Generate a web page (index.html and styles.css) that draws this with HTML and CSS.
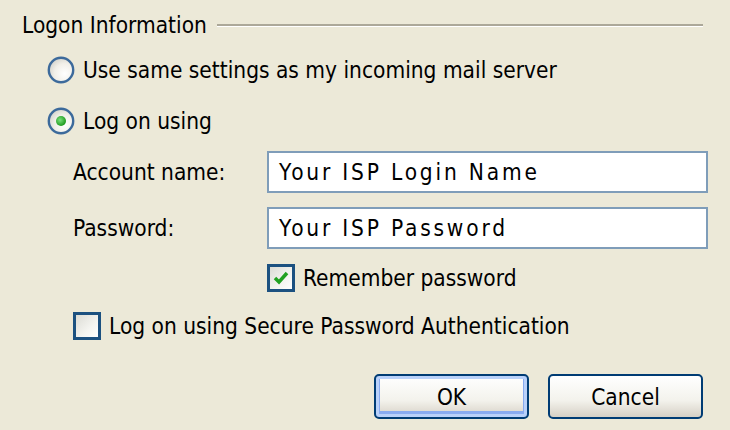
FILE: index.html
```html
<!DOCTYPE html>
<html lang="en">
<head>
    <meta charset="UTF-8">
    <title>Logon Information</title>
    <link rel="stylesheet" href="styles.css">
</head>
<body>
    <div class="dialog">
        <div class="group-title">
            <span>Logon Information</span>
            <div class="rule"></div>
        </div>

        <label class="option first">
            <svg class="radio" width="28" height="28" viewBox="0 0 28 28">
                <defs>
                    <radialGradient id="rf" cx="0.65" cy="0.65" r="0.7">
                        <stop offset="0" stop-color="#ffffff"/>
                        <stop offset="0.6" stop-color="#f1efe8"/>
                        <stop offset="1" stop-color="#d4d3cc"/>
                    </radialGradient>
                </defs>
                <circle cx="14" cy="14" r="12.2" fill="url(#rf)" stroke="#3c6a9b" stroke-width="2.4"/>
            </svg>
            <span>Use same settings as my incoming mail server</span>
        </label>

        <label class="option second">
            <svg class="radio" width="28" height="28" viewBox="0 0 28 28">
                <defs>
                    <radialGradient id="dot" cx="0.4" cy="0.4" r="0.6">
                        <stop offset="0" stop-color="#7be07b"/>
                        <stop offset="1" stop-color="#1f9a1f"/>
                    </radialGradient>
                </defs>
                <circle cx="14" cy="14" r="12.2" fill="url(#rf)" stroke="#3c6a9b" stroke-width="2.4"/>
                <circle cx="14" cy="14" r="5" fill="url(#dot)"/>
            </svg>
            <span>Log on using</span>
        </label>

        <div class="fields">
            <label for="account">Account name:</label>
            <div class="textbox" id="account">Your ISP Login Name</div>
            <label for="password">Password:</label>
            <div class="textbox" id="password">Your ISP Password</div>
        </div>

        <label class="check remember">
            <span class="box">
                <svg width="18" height="18" viewBox="0 0 18 18">
                    <path d="M3 9 L7 13 L15 4" fill="none" stroke="#21a121" stroke-width="3.5"/>
                </svg>
            </span>
            <span>Remember password</span>
        </label>

        <label class="check spa">
            <span class="box"></span>
            <span>Log on using Secure Password Authentication</span>
        </label>

        <div class="buttons">
            <button class="default">OK</button>
            <button>Cancel</button>
        </div>
    </div>
</body>
</html>
```

FILE: styles.css
```css
body {
    margin: 0;
    background-color: #ece9d8;
    font-family: "DejaVu Sans Condensed", "DejaVu Sans", sans-serif;
    font-size: 22.5px;
    color: #000;
}
.dialog {
    width: 730px;
    height: 430px;
    padding: 0 22px;
    box-sizing: border-box;
    display: flex;
    flex-direction: column;
}
.group-title {
    height: 50px;
    display: flex;
    align-items: center;
}
.rule {
    flex: 1;
    margin: 0 5px 0 10px;
    border-top: 2px solid #aca899;
    border-bottom: 1px solid #fff;
}
.option {
    height: 40px;
    display: flex;
    align-items: center;
    padding-left: 25px;
}
.option.second { margin-top: 11px; }
.radio { margin-right: 8px; }
.fields {
    margin-top: 10px;
    display: grid;
    grid-template-columns: 194px 1fr;
    row-gap: 14px;
    align-items: center;
    padding-left: 51px;
}
.textbox {
    height: 42px;
    box-sizing: border-box;
    border: 2px solid #7f9db9;
    background: #fff;
    padding-left: 10px;
    display: flex;
    align-items: center;
    letter-spacing: 2.8px;
}
.check {
    height: 28px;
    display: flex;
    align-items: center;
}
.remember { margin-top: 15px; padding-left: 245px; }
.spa { margin-top: 20px; padding-left: 51px; }
.box {
    width: 28px;
    height: 28px;
    box-sizing: border-box;
    border: 3px solid #1c5180;
    background: linear-gradient(135deg, #dcdcd5, #f4f4f0 60%, #ffffff);
    margin-right: 8px;
    display: flex;
    align-items: center;
    justify-content: center;
}
.buttons {
    margin-top: 34px;
    display: flex;
    justify-content: flex-end;
    gap: 19px;
    padding-right: 5px;
}
button {
    width: 155px;
    height: 45px;
    font-family: inherit;
    font-size: 22.5px;
    border: 2px solid #003c74;
    border-radius: 5px;
    background: linear-gradient(#ffffff, #f3f2ec 60%, #d6d0c5);
    color: #000;
}
button.default {
    box-shadow: inset 0 0 0 3px #b9d1fa, inset 0 -2px 0 4px #89abf0;
}
```
